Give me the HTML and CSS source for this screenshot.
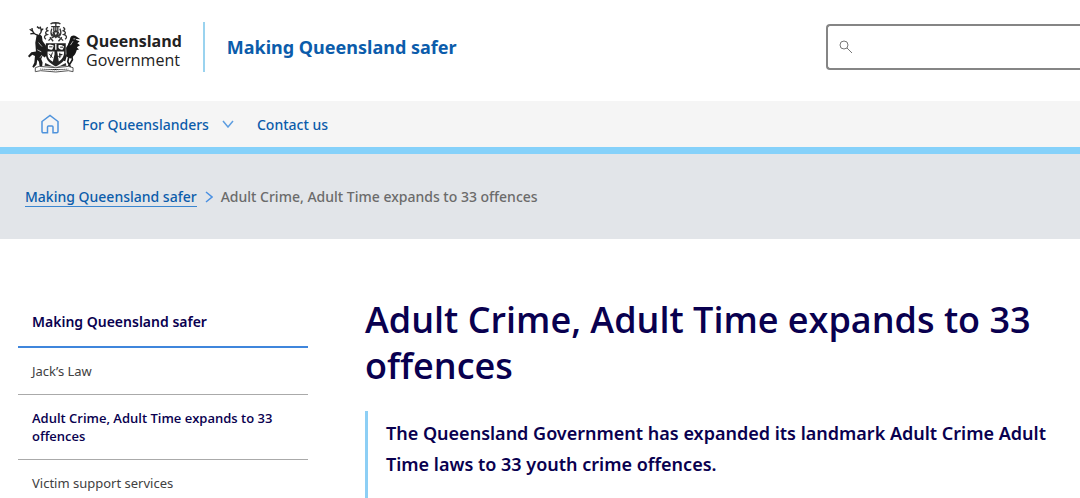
FILE: index.html
```html
<!DOCTYPE html>
<html lang="en">
<head>
  <meta charset="UTF-8">
  <meta name="viewport" content="width=device-width, initial-scale=1">
  <title>Adult Crime, Adult Time expands to 33 offences</title>
  <link rel="stylesheet" href="styles.css">
</head>
<body>

  <header class="site-header">
    <a class="brand" href="#" aria-label="Queensland Government">
      <svg class="crest" viewBox="6 10 160 154" aria-hidden="true">
        <!-- crest and mantling -->
        <g fill="none" stroke="#333" stroke-width="4">
          <path d="M74 16c6-5 24-5 30 0M76 24h26M78 30c-4 10-4 18 2 24M102 30c5 10 4 18-2 24M84 22v16M96 22v16M90 14v28"/>
          <path d="M66 26c-8 4-6 10 2 10-10 2-12 8-4 12-8 2-12 8-4 14M112 26c8 4 6 10-2 10 10 2 12 8 4 12 8 2 12 8 4 14"/>
          <path d="M68 66c8-10 14-8 22-16 8 8 14 6 22 16M76 44l8 10 6-8 6 8 8-10M72 56l10 12M108 56l-10 12"/>
        </g>
        <path fill="#333" d="M80 40l10-6 10 6-3 12-7 8-7-8z"/>
        <path fill="#fff" d="M86 42h8l-4 8z"/>
        <!-- shield -->
        <path fill="#222" d="M60 74h60v34c0 18-14 28-30 36-16-8-30-18-30-36z"/>
        <g fill="#fff">
          <path d="M66 80c6-4 14 0 18 2l-4 10c-4 4-12 0-14-2zM98 80c6-2 14 0 17 4l-4 9c-6 2-11-2-13-5z"/>
          <path d="M65 99h21v9l-5 22c-10-6-16-12-16-22zM94 99h21c0 14-4 22-16 30z"/>
          <path d="M88 76h4v18h-4z"/>
        </g>
        <g fill="none" stroke="#222" stroke-width="3">
          <path d="M70 85h10M103 86h9M70 106l10 12M80 102l-6 16M100 108h10M102 103v16M97 114l10-2"/>
        </g>
        <!-- red deer -->
        <path fill="#1c1c1c" d="M32 50l10-3 6 6 2 14 10 14 2 30-6 6-6-5-4 10 4 10-2 18h-6l-3-20-5-6-2 14-9 10-4-3 6-12 2-20-8-4-9 8-4-4 10-12 14-2-2-26z"/>
        <path fill="none" stroke="#222" stroke-width="4" d="M36 50c-12-3-18-12-18-22M20 38l-9-6M25 44l-12 2M40 48c8-6 8-14 2-24M44 38l8-8M41 30l-8-6"/>
        <path fill="none" stroke="#fff" stroke-width="2" d="M38 72l10 12M34 94l12 6M42 118l6-8"/>
        <!-- brolga -->
        <path fill="#161616" d="M121 88c8-12 11-22 13-31 2-7 12-9 18-3l12 8-13-1 3 12c-1 9 2 17-2 25-4 14-14 19-18 22l-12-6z"/>
        <path fill="#161616" d="M138 60l24 8-7 6 8 6-10 6 7 7-13 3-10 12-12-4 4-30z"/>
        <path fill="none" stroke="#fff" stroke-width="2" d="M134 80l8-12M143 61h6"/>
        <path fill="none" stroke="#1c1c1c" stroke-width="5" d="M130 112l-4 18 8 16M138 110l2 14-12 20M122 108l-6 20"/>
        <!-- motto scroll -->
        <path fill="#fff" stroke="#555" stroke-width="3" d="M28 148l12-4 50 4 38-4 14 4v12l-14-3-38 4-46-4-16 3z"/>
        <path stroke="#777" stroke-width="3" stroke-dasharray="4 2" d="M42 152l46 3 40-3"/>
        <path fill="#333" d="M58 134l18 8 14 4 14-4 16-8 2 8-32 4-34-4z"/>
      </svg>
      <span class="wordmark">
        <strong>Queensland</strong>
        <span>Government</span>
      </span>
    </a>
    <a class="site-name" href="#">Making Queensland safer</a>
    <form class="search" role="search">
      <svg class="search-icon" viewBox="0 0 14 14" aria-hidden="true">
        <circle cx="5" cy="5" r="4"/>
        <path d="M8 8l5 5"/>
      </svg>
      <input class="search-input" type="search" aria-label="Search">
    </form>
  </header>

  <nav class="main-nav" aria-label="Main">
    <a class="home" href="#" aria-label="Home">
      <svg viewBox="0 0 18 20" aria-hidden="true">
        <path d="M1 7.500L9 1.500l8 6V17.500a1.200 1.200 0 0 1-1.200 1.200H12V13a1 1 0 0 0-1-1H7.500a1 1 0 0 0-1 1v5.700H2.200A1.200 1.200 0 0 1 1 17.500z"/>
      </svg>
    </a>
    <a class="nav-link" href="#">For Queenslanders
      <svg class="chevron" viewBox="0 0 12 8" aria-hidden="true"><path d="M1 1l5 6 5-6"/></svg>
    </a>
    <a class="nav-link" href="#">Contact us</a>
  </nav>

  <nav class="breadcrumbs" aria-label="Breadcrumb">
    <a href="#">Making Queensland safer</a>
    <svg class="separator" viewBox="0 0 8 12" aria-hidden="true"><path d="M1 1l6 5-6 5"/></svg>
    <span>Adult Crime, Adult Time expands to 33 offences</span>
  </nav>

  <div class="page">
    <nav class="side-nav" aria-label="Section">
      <a class="side-title" href="#">Making Queensland safer</a>
      <ul>
        <li><a href="#">Jack’s Law</a></li>
        <li><a class="current" href="#" aria-current="page">Adult Crime, Adult Time expands to 33 offences</a></li>
        <li><a href="#">Victim support services</a></li>
      </ul>
    </nav>

    <main class="content">
      <h1>Adult Crime, Adult Time expands to 33 offences</h1>
      <p class="intro">The Queensland Government has expanded its landmark Adult Crime Adult Time laws to 33 youth crime offences.</p>
    </main>
  </div>

</body>
</html>
```

FILE: styles.css
```css
* {
  box-sizing: border-box;
}
body {
  margin: 0;
  font-family: "Noto Sans", sans-serif;
  font-size: 14px;
  color: #414141;
  background-color: #fff;
  overflow: hidden;
}
a {
  color: #0b5cab;
  text-decoration: none;
}
svg {
  display: block;
  flex: none;
}

/* Header */
.site-header {
  display: flex;
  align-items: center;
  padding: 22px 0 29px 28px;
}
.brand {
  display: flex;
  align-items: center;
  gap: 5px;
  height: 50px;
  padding-right: 21px;
  border-right: 2px solid #9ad3ef;
  color: #222;
}
.crest {
  width: 53px;
  height: 51px;
}
.wordmark {
  display: flex;
  flex-direction: column;
  padding-top: 8px;
  font-family: "Open Sans", sans-serif;
  font-size: 16px;
  line-height: 19px;
}
.site-name {
  margin-left: 22px;
  font-size: 18px;
  font-weight: 700;
}
.search {
  display: flex;
  align-items: center;
  width: 254px;
  height: 46px;
  margin-left: auto;
  padding-left: 11px;
  border: 2px solid #858585;
  border-right: none;
  border-radius: 4px 0 0 4px;
}
.search-icon {
  width: 14px;
  height: 14px;
  fill: none;
  stroke: #777;
}
.search-input {
  flex: 1;
  min-width: 0;
  height: 100%;
  padding: 0 10px;
  border: none;
  outline: none;
  background: none;
  font: inherit;
}

/* Main navigation */
.main-nav {
  display: flex;
  align-items: center;
  height: 53px;
  padding-left: 41px;
  background-color: #f5f5f5;
  border-bottom: 7px solid #85d1fa;
}
.home svg {
  width: 18px;
  height: 20px;
  fill: none;
  stroke: #4f93dc;
  stroke-width: 1.5;
}
.nav-link {
  display: flex;
  align-items: center;
  gap: 13px;
  margin-left: 23px;
  font-weight: 500;
}
.chevron {
  width: 12px;
  height: 8px;
  fill: none;
  stroke: #5d9de0;
  stroke-width: 1.5;
}

/* Breadcrumbs */
.breadcrumbs {
  display: flex;
  align-items: center;
  gap: 8px;
  height: 85px;
  padding-left: 25px;
  background-color: #e2e5e9;
  font-weight: 500;
  color: #6b6b6b;
}
.breadcrumbs a {
  border-bottom: 1px solid #3a86d0;
}
.separator {
  width: 8px;
  height: 12px;
  fill: none;
  stroke: #4a90e2;
  stroke-width: 1.5;
}

/* Page body */
.page {
  display: grid;
  grid-template-columns: 290px 1fr;
  column-gap: 57px;
  padding: 58px 18px 0;
}
.side-nav ul {
  margin: 0;
  padding: 0;
  list-style: none;
}
.side-nav a {
  display: block;
  padding: 14px;
  font-size: 13px;
  line-height: 18px;
  color: #414141;
}
.side-nav li {
  border-bottom: 1px solid #aaa;
}
.side-nav .side-title {
  padding: 16px 14px 15px;
  border-bottom: 2px solid #3f86dc;
  font-size: 14px;
  font-weight: 600;
  color: #09004f;
}
.side-nav .current {
  font-family: "Open Sans", sans-serif;
  font-weight: 600;
  color: #09004f;
}
.content h1 {
  margin: 0 0 22px;
  font-family: "Open Sans", sans-serif;
  font-size: 36px;
  line-height: 46px;
  font-weight: 600;
  color: #09004f;
}
.intro {
  margin: 0;
  padding: 7px 0 50px 18px;
  border-left: 3px solid #8dcff5;
  font-size: 18px;
  line-height: 31px;
  font-weight: 600;
  color: #09004f;
}
```
